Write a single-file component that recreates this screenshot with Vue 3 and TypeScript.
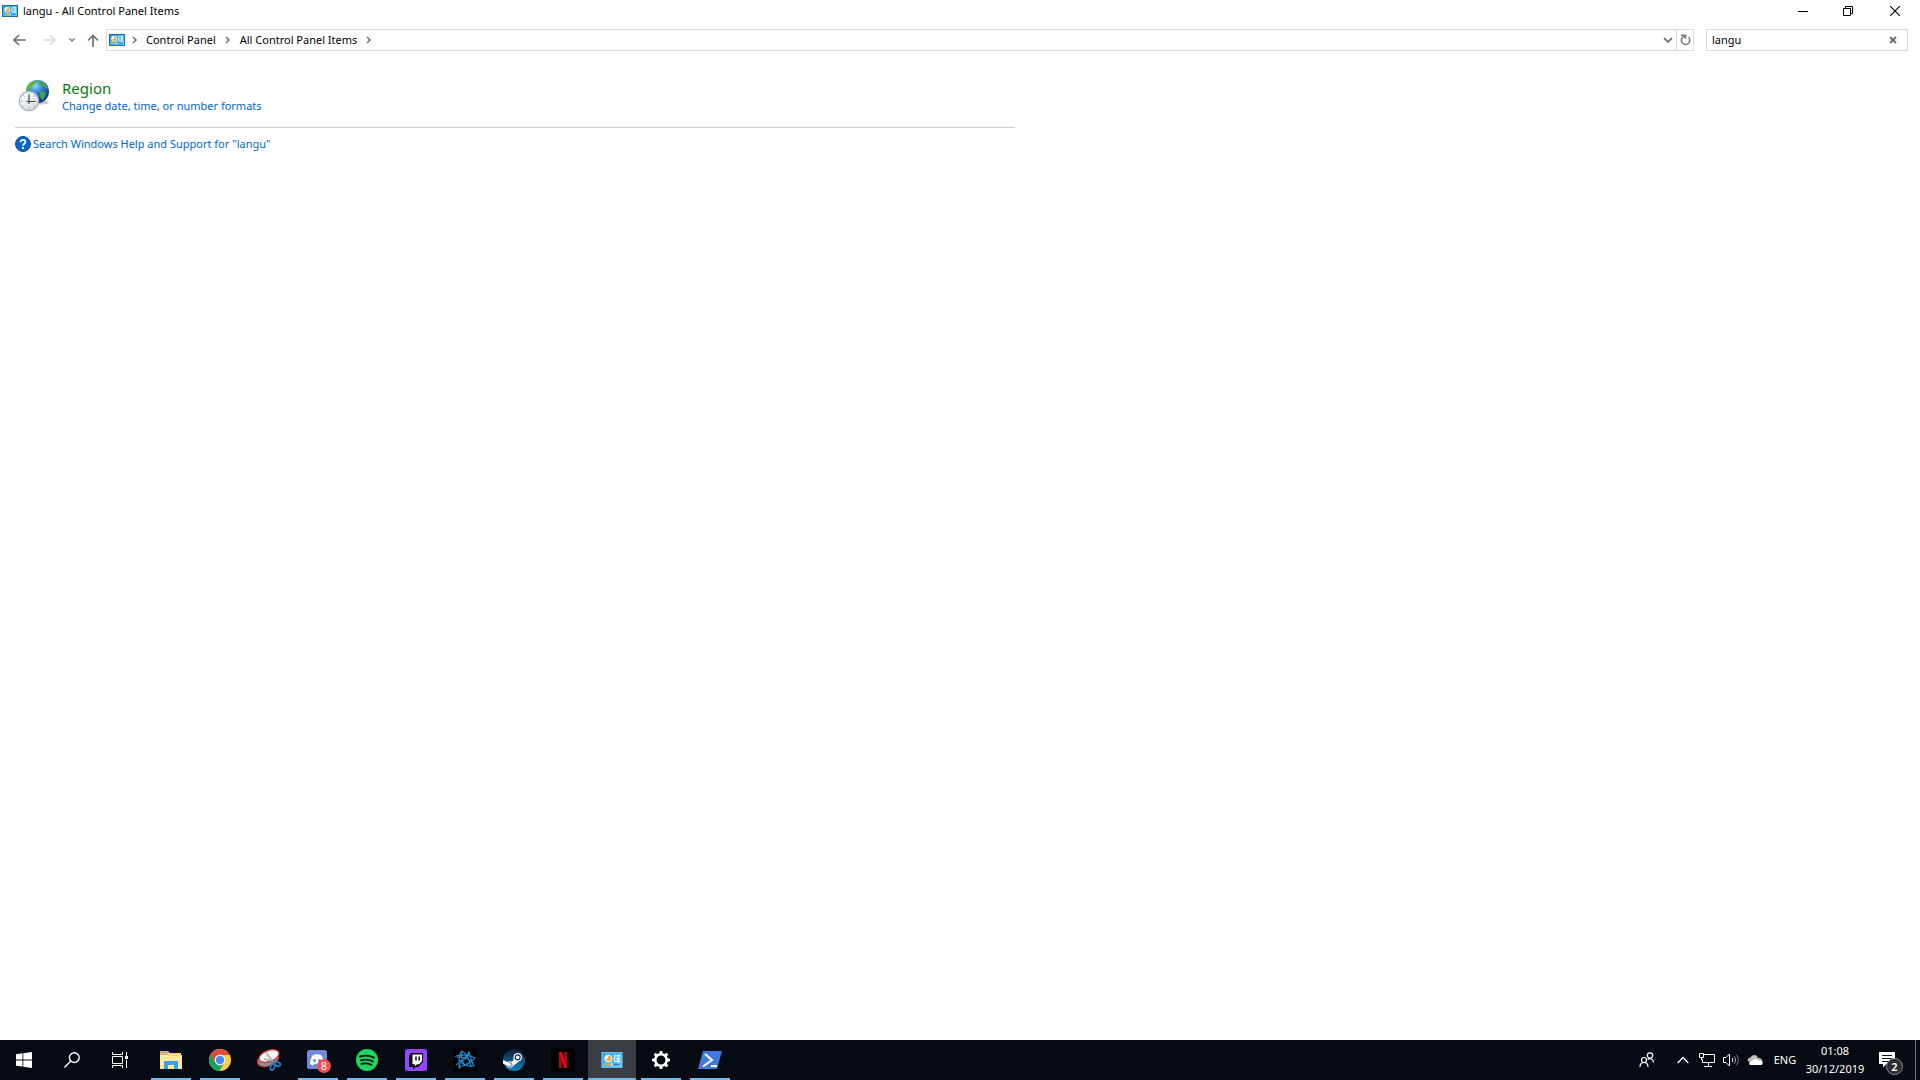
<script setup lang="ts">
import { ref } from 'vue'

interface TaskApp {
  id: string
  label: string
  running: boolean
  active?: boolean
}

const query = ref('langu')

const apps: TaskApp[] = [
  { id: 'explorer', label: 'File Explorer', running: true },
  { id: 'chrome', label: 'Google Chrome', running: true },
  { id: 'snip', label: 'Snipping Tool', running: false },
  { id: 'discord', label: 'Discord', running: true },
  { id: 'spotify', label: 'Spotify', running: true },
  { id: 'twitch', label: 'Twitch', running: true },
  { id: 'battlenet', label: 'Battle.net', running: true },
  { id: 'steam', label: 'Steam', running: true },
  { id: 'netflix', label: 'Netflix', running: true },
  { id: 'panel', label: 'Control Panel', running: true, active: true },
  { id: 'settings', label: 'Settings', running: true },
  { id: 'powershell', label: 'Windows PowerShell', running: true },
]
</script>

<template>
  <div class="screen">
    <svg class="defs" width="0" height="0" aria-hidden="true">
      <defs>
        <linearGradient id="cpFill" x1="0" y1="0" x2="1" y2="1">
          <stop offset="0" stop-color="#35a3e4" />
          <stop offset="1" stop-color="#74cdf7" />
        </linearGradient>
        <symbol id="cpIcon" viewBox="0 0 16 12">
          <rect width="16" height="12" fill="var(--cp-edge)" />
          <rect x="1" y="1" width="14" height="10" fill="url(#cpFill)" />
          <circle cx="5.200" cy="4.800" r="2.800" fill="#fff" />
          <path d="M5.200 4.800V2.600a2.200 2.200 0 0 1 0 4.400 2.200 2.200 0 0 1-2.100-1.500z" fill="#f5a623" />
          <path d="M11.500 2.800H14M11.500 5H14M11.500 7H14" stroke="#fff" stroke-width="1.200" />
          <path d="M11.200 2.800H10V7h1.200M9 5h1" fill="none" stroke="#e9f7ff" stroke-width=".700" />
          <path d="M2.500 9.300h5" stroke="#f5a623" stroke-width="1.100" />
          <path d="M8.500 9.300h5" stroke="#1f86c8" stroke-width="1.100" />
          <path d="M8 8.500v1.600" stroke="#fff" />
        </symbol>
      </defs>
    </svg>

    <header class="titlebar">
      <svg class="cp-small" aria-hidden="true"><use href="#cpIcon" /></svg>
      <h1 class="title">langu - All Control Panel Items</h1>
      <div class="window-controls">
        <button type="button" aria-label="Minimise">
          <svg width="10" height="10" viewBox="0 0 10 10"><path d="M0 5.500h10" stroke="#000" /></svg>
        </button>
        <button type="button" aria-label="Restore">
          <svg width="10" height="10" viewBox="0 0 10 10" fill="none" stroke="#000"><path d="M.5 2.500h7v7h-7zM2.500 2.500v-2h7v7h-2" /></svg>
        </button>
        <button type="button" aria-label="Close">
          <svg width="10" height="10" viewBox="0 0 10 10"><path d="M0 0l10 10M10 0L0 10" stroke="#000" stroke-width="1.100" /></svg>
        </button>
      </div>
    </header>

    <nav class="navbar">
      <div class="history">
        <button class="arrow" type="button" aria-label="Back">
          <svg width="13" height="12" viewBox="0 0 13 12"><path d="M1 6h12M6 1L1 6l5 5" fill="none" stroke="#707070" stroke-width="1.700" /></svg>
        </button>
        <button class="arrow" type="button" aria-label="Forward" disabled>
          <svg width="13" height="12" viewBox="0 0 13 12"><path d="M0 6h12M7 1l5 5-5 5" fill="none" stroke="#dcdcdc" stroke-width="1.600" /></svg>
        </button>
        <button class="recent" type="button" aria-label="Recent locations">
          <svg width="8" height="6" viewBox="0 0 8 6"><path d="M1.500 1.500L4 4l2.500-2.500" fill="none" stroke="#7c7c7c" stroke-width="1.500" /></svg>
        </button>
        <button class="up" type="button" aria-label="Up">
          <svg width="12" height="13" viewBox="0 0 12 13"><path d="M6 13V1.500M1 6.500l5-5 5 5" fill="none" stroke="#707070" stroke-width="1.700" /></svg>
        </button>
      </div>
      <div class="address">
        <svg class="cp-small" aria-hidden="true"><use href="#cpIcon" /></svg>
        <svg class="sep first" viewBox="0 0 6 8"><path d="M1 1l3 3-3 3" /></svg>
        <a href="#control-panel">Control Panel</a>
        <svg class="sep" viewBox="0 0 6 8"><path d="M1 1l3 3-3 3" /></svg>
        <a href="#all-items">All Control Panel Items</a>
        <svg class="sep" viewBox="0 0 6 8"><path d="M1 1l3 3-3 3" /></svg>
        <button class="previous" type="button" aria-label="Previous locations">
          <svg width="10" height="7" viewBox="0 0 10 7"><path d="M1 1l4 4 4-4" fill="none" stroke="#7c7c7c" stroke-width="1.900" /></svg>
        </button>
        <button class="refresh" type="button" aria-label="Refresh">
          <svg width="11" height="12" viewBox="0 0 11 12"><path d="M8.500 3.300A4.200 4.200 0 1 1 2.600 3.300L4.800 2.500M1 1.200h4.500v3.600" fill="none" stroke="#7c7c7c" stroke-width="1.600" /></svg>
        </button>
      </div>
      <div class="search">
        <input v-model="query" type="text" aria-label="Search Control Panel" spellcheck="false" />
        <button type="button" aria-label="Clear search" @click="query = ''">
          <svg width="8" height="8" viewBox="0 0 8 8"><path d="M1 1l6 6M7 1L1 7" stroke="#6c6c6c" stroke-width="1.900" /></svg>
        </button>
      </div>
    </nav>

    <main class="results">
      <section class="result">
        <svg class="region-icon" viewBox="0 0 32 34" aria-hidden="true">
          <defs>
            <radialGradient id="sea" cx=".4" cy=".25" r=".8">
              <stop offset="0" stop-color="#8fd5fb" />
              <stop offset=".45" stop-color="#2a78d2" />
              <stop offset="1" stop-color="#0b2287" />
            </radialGradient>
            <linearGradient id="dial" x1="0" y1="0" x2="1" y2="1">
              <stop offset="0" stop-color="#fff" />
              <stop offset="1" stop-color="#cfd8df" />
            </linearGradient>
          </defs>
          <ellipse cx="22" cy="24.500" rx="9" ry="2" fill="#c9c9c9" />
          <circle cx="19.500" cy="13.500" r="11.500" fill="url(#sea)" />
          <path d="M9 9.500C11 5 15 2.800 18 2.300c2 0 1 2-.5 2.700-1 1.500-3 2-3.500 4-1 2-3 1.500-3.500 4.500L8.300 15C8 13 8.300 11 9 9.500z" fill="#5bbb38" />
          <path d="M21 3c4 .5 7.500 3.500 9 7l-1.500 1-2-2.500-2 .5-3-2.500z" fill="#49a640" />
          <path d="M21.500 14.500l3.500-1.500 3 2-1 4-2.500 3.500-2-3z" fill="#3da83e" />
          <circle cx="11" cy="23" r="9.600" fill="url(#dial)" stroke="#aab4bb" stroke-width="1.300" />
          <path d="M11 15v1.500M11 29.500V31M3 23h1.500M17.500 23H19M5.300 17.300l1 1M16.700 17.300l-1 1M5.300 28.700l1-1M16.700 28.700l-1-1" stroke="#8a959c" />
          <path d="M11 16.500V23.500h6M8.500 23.500H11V26" fill="none" stroke="#33464f" stroke-width="1.100" />
        </svg>
        <div class="result-text">
          <a class="result-title" href="#region">Region</a>
          <a class="task" href="#formats">Change date, time, or number formats</a>
        </div>
      </section>
      <div class="help">
        <svg width="16" height="16" viewBox="0 0 16 16" aria-hidden="true">
          <circle cx="8" cy="8" r="7.500" fill="#0767cf" stroke="#084f9b" />
          <path d="M5.600 6.200C5.600 3 10.500 3.200 10.400 6c0 1.700-2.300 1.800-2.300 3.700" fill="none" stroke="#fff" stroke-width="1.800" />
          <rect x="7" y="11" width="2" height="2" fill="#fff" />
        </svg>
        <a class="task" href="#help">Search Windows Help and Support for "langu"</a>
      </div>
    </main>

    <footer class="taskbar">
      <div class="system">
        <button type="button" aria-label="Start">
          <svg width="16" height="16" viewBox="0 0 16 16" fill="#fff"><path d="M0 2.200l6.500-.9v6.200H0zM7.300 1.200L16 0v7.500H7.300zM0 8.400h6.500v6.200L0 13.700zM7.300 8.400H16V16l-8.700-1.200z" /></svg>
        </button>
        <button type="button" aria-label="Search">
          <svg width="16" height="16" viewBox="0 0 16 16" fill="none" stroke="#fff" stroke-width="1.400"><circle cx="10.300" cy="5.600" r="4.900" /><path d="M6.800 9.100L.5 15.500" /></svg>
        </button>
        <button type="button" aria-label="Task View">
          <svg width="16" height="16" viewBox="0 0 16 16" fill="none" stroke="#fff"><path d="M.5 0v2.500h10V0M.5 4.500h10v7H.5zM.5 16v-2.500h10V16M14.500 0v4M14.500 8v8" /><rect x="13" y="4" width="3" height="3" fill="#fff" stroke="none" /></svg>
        </button>
      </div>
      <div class="apps">
        <button
          v-for="app in apps"
          :key="app.id"
          type="button"
          class="app"
          :class="{ running: app.running, active: app.active }"
          :aria-label="app.label"
        >
          <svg v-if="app.id === 'explorer'" width="24" height="24" viewBox="0 0 24 24">
            <path d="M1 3h8l2 2h11v16H1z" fill="#e9b64b" />
            <path d="M3 4.500h5" stroke="#5cc0e8" />
            <path d="M1 7h22v14H1z" fill="#ffe9a0" />
            <path d="M9 5h13v3H9z" fill="#f8d775" />
            <path d="M5 21v-8h14v8h-4v-4H9v4z" fill="#35a5e0" />
          </svg>
          <svg v-else-if="app.id === 'chrome'" width="24" height="24" viewBox="0 0 24 24">
            <circle cx="12" cy="12" r="11" fill="#ffcd41" />
            <path d="M12 12L2.500 6.500A11 11 0 0 0 11.500 23l4.800-8.500z" fill="#1aa260" />
            <path d="M12 12L7.200 14.500 2.500 6.500A11 11 0 0 1 21.600 7H12z" fill="#dc4b3e" />
            <circle cx="12" cy="12" r="5.400" fill="#f4f4f4" />
            <circle cx="12" cy="12" r="4.200" fill="#4a8af4" />
          </svg>
          <svg v-else-if="app.id === 'snip'" width="24" height="24" viewBox="0 0 24 24">
            <ellipse cx="11" cy="11.500" rx="11" ry="6.500" transform="rotate(-20 11 11.500)" fill="#8e8e8e" stroke="#c43a35" />
            <ellipse cx="12" cy="8" rx="10.500" ry="5.500" transform="rotate(-20 12 8)" fill="#f4f4f4" stroke="#d5342f" stroke-width="1.200" />
            <path d="M9 5l8 10M7 11l11 3" stroke="#aaa" stroke-width="1.600" />
            <path d="M13 13.500l4 1.500M17 11v4" stroke="#666" stroke-width="1.200" />
            <ellipse cx="15.500" cy="19" rx="2" ry="3.200" transform="rotate(20 15.500 19)" fill="none" stroke="#2089cc" stroke-width="1.600" />
            <ellipse cx="20.500" cy="16" rx="3" ry="1.900" transform="rotate(25 20.500 16)" fill="none" stroke="#2089cc" stroke-width="1.600" />
          </svg>
          <span v-else-if="app.id === 'discord'" class="badged">
            <svg width="24" height="24" viewBox="0 0 24 24">
              <rect x="1" y="2" width="20" height="19" rx="2.500" fill="#7289da" />
              <path d="M7 7c2.500-1 5.500-1 8 0 2 2.500 3 5.500 3 9l-3 1.500-1.300-1.700H8.300L7 17.500 4 16c0-3.500 1-6.500 3-9z" fill="#fff" />
              <circle cx="8.500" cy="12.500" r="1.500" fill="#7289da" /><circle cx="13.500" cy="12.500" r="1.500" fill="#7289da" />
            </svg>
            <span class="badge">8</span>
          </span>
          <svg v-else-if="app.id === 'spotify'" width="24" height="24" viewBox="0 0 24 24">
            <circle cx="12" cy="12" r="11" fill="#1ed760" />
            <path d="M5 8.500c5-1.500 10-1 14 1.200M5.800 12.300c4.200-1.200 8.500-.8 12 1.100M6.500 15.800c3.500-.9 7-.6 10 1" fill="none" stroke="#0b1a12" stroke-width="1.900" stroke-linecap="round" />
          </svg>
          <svg v-else-if="app.id === 'twitch'" width="24" height="24" viewBox="0 0 24 24">
            <rect x="1" y="1" width="22" height="22" rx="2.500" fill="#9146ff" />
            <path d="M7 5h12v9l-5 5h-2l-3 2.500V19H5V8z" fill="#0a0a0a" />
            <path d="M8.500 6.500H18v6.800l-3 3h-2l-2 2v-2H8.500z" fill="#fff" />
            <path d="M12 8.500v4M15.200 8.500v4" stroke="#0a0a0a" stroke-width="1.500" />
          </svg>
          <svg v-else-if="app.id === 'battlenet'" width="24" height="24" viewBox="0 0 24 24">
            <path d="M0 0h24v24H0z" fill="#000" />
            <g fill="none" stroke="#128bd6" stroke-width="1.200">
              <path d="M2 8.500C8 6 17 7 22 10c-3 4-11 8-17 9" />
              <path d="M7 21C5 14 6 6 9 3c4 2 8 9 9 16" />
              <path d="M3 17c3-2 10-8 13-13 1 4 3 11 5 14-6 1-12-2-15-7" />
            </g>
            <path d="M4 9c5 0 11 1 16 6M9 4c-1 5 0 10 3 14M16 5c-2 5-6 9-10 12" fill="none" stroke="#55b8ef" stroke-width=".700" />
          </svg>
          <svg v-else-if="app.id === 'steam'" width="24" height="24" viewBox="0 0 24 24">
            <defs>
              <linearGradient id="steamFill" x1="0" y1="0" x2="0" y2="1"><stop offset="0" stop-color="#141b3a" /><stop offset="1" stop-color="#1685b8" /></linearGradient>
            </defs>
            <circle cx="12" cy="12" r="11" fill="url(#steamFill)" />
            <path d="M1 12l8 3.500 4-6 4 4-6 4.500-3 1-7-3.500z" fill="#fff" />
            <circle cx="15.700" cy="9.300" r="4.300" fill="#fff" /><circle cx="15.700" cy="9.300" r="2.500" fill="#fff" stroke="#182b50" stroke-width="1.200" />
            <circle cx="8" cy="16.500" r="3.200" fill="#fff" /><path d="M6 17.500c1 2 4 1.500 4-.7s-2-2.300-3-1.800" fill="none" stroke="#185e8c" />
          </svg>
          <svg v-else-if="app.id === 'netflix'" width="24" height="24" viewBox="0 0 24 24">
            <path d="M0 0h24v24H0z" fill="#000" />
            <path d="M8 4h2.800v16H8zM13.200 4H16v16h-2.800z" fill="#b20710" />
            <path d="M8 4h2.800L16 20h-2.800z" fill="#e50914" />
          </svg>
          <svg v-else-if="app.id === 'panel'" class="cp-large"><use href="#cpIcon" /></svg>
          <svg v-else-if="app.id === 'settings'" width="20" height="20" viewBox="0 0 20 20">
            <circle cx="10" cy="10" r="5.700" fill="none" stroke="#fff" stroke-width="2.500" />
            <path v-for="n in 8" :key="n" d="M8.300 4L8.700 1h2.600l.4 3z" fill="#fff" :transform="`rotate(${n * 45} 10 10)`" />
          </svg>
          <svg v-else width="24" height="24" viewBox="0 0 24 24">
            <path d="M5 3h19l-5 18H0z" fill="#4179dc" />
            <path d="M7 6l7 6-9 6.500M13 18h6" fill="none" stroke="#fff" stroke-width="2" />
          </svg>
        </button>
      </div>
      <div class="tray">
        <button class="people" type="button" aria-label="People">
          <svg width="16" height="16" viewBox="0 0 16 16" fill="none" stroke="#fff" stroke-width="1.200"><circle cx="5" cy="8" r="2.500" /><path d="M1 15c0-6 8-6 8 0" /><circle cx="11" cy="3.500" r="2.700" /><path d="M8.500 7.500c3-2 6-.5 6 3" /></svg>
        </button>
        <button class="tray-icon" type="button" aria-label="Show hidden icons">
          <svg width="12" height="8" viewBox="0 0 12 8"><path d="M.7 7L6 1.500 11.300 7" fill="none" stroke="#fff" stroke-width="1.300" /></svg>
        </button>
        <button class="tray-icon" type="button" aria-label="Network">
          <svg width="16" height="14" viewBox="0 0 16 14" fill="none" stroke="#fff"><path d="M5 1.500h10.500v8H3.500V6M.5.500h4v4h-4zM9.500 10v3M5 13.500h8M2.500 5v2" /></svg>
        </button>
        <button class="tray-icon" type="button" aria-label="Volume">
          <svg width="16" height="14" viewBox="0 0 16 14" fill="none" stroke="#fff"><path d="M.5 4.500h2.500l3.500-3.500v12L3 9.500H.5zM9 5c1 1 1 3 0 4" /><path d="M11 3.500c2 2 2 5 0 7" stroke="#bbb" /><path d="M13 1.500c3 3.500 3 7.500 0 11" stroke="#777" /></svg>
        </button>
        <button class="tray-icon" type="button" aria-label="OneDrive">
          <svg width="16" height="12" viewBox="0 0 16 12"><path d="M1 7.500C0 5 2 3.500 3.500 3.500 5 0 10 0 11 4c3 0 5 2 4.500 4.500z" fill="#bdbdbd" /><path d="M3 11c-2-2 0-4.500 2-4 2-3 5-2.500 6.500-.5C15 6 17 9 14.500 11z" fill="#fff" /></svg>
        </button>
        <button class="language" type="button">ENG</button>
        <button class="clock" type="button"><span>01:08</span><span>30/12/2019</span></button>
        <button class="action" type="button" aria-label="Notifications">
          <span class="notes">
            <svg width="16" height="16" viewBox="0 0 16 16"><path d="M0 0h16v12H7.500L4 15.500V12H0z" fill="#fff" /><path d="M3 3.500h10M3 6.500h10M3 9.500h6" stroke="#10131a" /></svg>
            <span class="count">2</span>
          </span>
        </button>
        <button class="desktop" type="button" aria-label="Show desktop"></button>
      </div>
    </footer>
  </div>
</template>

<style>
body {
  margin: 0;
}
</style>

<style scoped>
.screen {
  --cp-edge: #1670a8;
  display: flex;
  flex-direction: column;
  min-height: 100vh;
  background: #fff;
  color: #000;
  font: 11px/16px "Noto Sans", "Open Sans", sans-serif;
}
.defs {
  position: absolute;
}
button {
  display: flex;
  align-items: center;
  justify-content: center;
  flex: none;
  box-sizing: border-box;
  padding: 0;
  border: 0;
  background: none;
  color: inherit;
  font: inherit;
}
a {
  color: inherit;
  text-decoration: none;
}
a:hover {
  text-decoration: underline;
}
.cp-small {
  flex: none;
  width: 16px;
  height: 12px;
}
.titlebar {
  display: flex;
  height: 22px;
  align-items: center;
  padding-left: 2px;
}
.title {
  flex: 1;
  margin: 0 0 0 5px;
  font: inherit;
}
.window-controls {
  display: flex;
}
.window-controls button {
  width: 45px;
  height: 20px;
}
.window-controls button:last-child {
  width: 50px;
}
.navbar {
  display: flex;
  align-items: center;
  height: 36px;
  padding-right: 12px;
}
.history {
  display: flex;
  width: 106px;
  align-items: center;
}
.history button {
  height: 20px;
}
.arrow {
  width: 30px;
}
.arrow:first-child {
  margin-left: 4px;
}
.recent {
  width: 16px;
}
.up {
  width: 26px;
}
.address {
  display: flex;
  flex: 1;
  align-items: center;
  box-sizing: border-box;
  height: 22px;
  padding-left: 2px;
  border: 1px solid #d9d9d9;
}
.sep {
  width: 6px;
  height: 8px;
  margin: 0 9px;
  fill: none;
  stroke: #707070;
  stroke-width: 1.5;
}
.first {
  margin: 0 8px 0 7px;
}
.previous {
  width: 16px;
  height: 20px;
  margin-left: auto;
}
.refresh {
  width: 17px;
  height: 20px;
  border-left: 1px solid #d9d9d9;
}
.search {
  display: flex;
  box-sizing: border-box;
  width: 202px;
  height: 22px;
  margin-left: 12px;
  border: 1px solid #d9d9d9;
}
.search input {
  flex: 1;
  min-width: 0;
  padding: 0 5px;
  border: 0;
  outline: 0;
  background: none;
  color: #000;
  font: inherit;
}
.search button {
  width: 28px;
}
.results {
  flex: 1;
  padding: 20px 15px;
  color: #0066cc;
}
.result {
  display: flex;
  box-sizing: border-box;
  max-width: 1000px;
  height: 50px;
  padding-left: 3px;
  border-bottom: 1px solid #ccc;
}
.region-icon {
  width: 32px;
  height: 34px;
}
.result-text {
  display: flex;
  flex-direction: column;
  align-items: flex-start;
  margin-left: 12px;
}
.result-title {
  color: #0b7a0b;
  font-size: 15px;
  line-height: 20px;
}
.help {
  display: flex;
  align-items: center;
  gap: 2px;
  margin-top: 8px;
}
.taskbar {
  display: flex;
  height: 40px;
  background: #070b13;
  color: #fff;
}
.system,
.apps,
.tray {
  display: flex;
}
.system button {
  width: 48px;
}
.apps {
  gap: 1px;
  margin-left: 3px;
}
.app {
  width: 48px;
  padding-top: 2px;
  border-bottom: 2px solid transparent;
}
.running::after {
  position: absolute;
  width: 40px;
  height: 2px;
  margin-top: 38px;
  background: #76b9ed;
  content: "";
}
.active {
  --cp-edge: #5cc0f2;
  background: #3a3d42;
}
.active::after {
  width: 48px;
}
.cp-large {
  width: 22px;
  height: 16px;
}
.badged,
.notes {
  display: flex;
  position: relative;
}
.badge {
  position: absolute;
  right: -1px;
  bottom: -1px;
  width: 14px;
  border-radius: 7px;
  background: #f04f50;
  line-height: 14px;
}
.tray {
  margin-left: auto;
}
.people,
.action {
  width: 48px;
}
.tray-icon {
  width: 24px;
}
.language {
  width: 36px;
}
.clock {
  flex-direction: column;
  width: 64px;
  line-height: 18px;
}
.notes {
  width: 24px;
}
.count {
  position: absolute;
  top: 6px;
  left: 7px;
  box-sizing: border-box;
  width: 17px;
  border: 1px solid #8b8d90;
  border-radius: 9px;
  background: #2b2d31;
  font-weight: 600;
  line-height: 15px;
}
.desktop {
  width: 5px;
  border-left: 1px solid #6c6f74;
}
</style>
